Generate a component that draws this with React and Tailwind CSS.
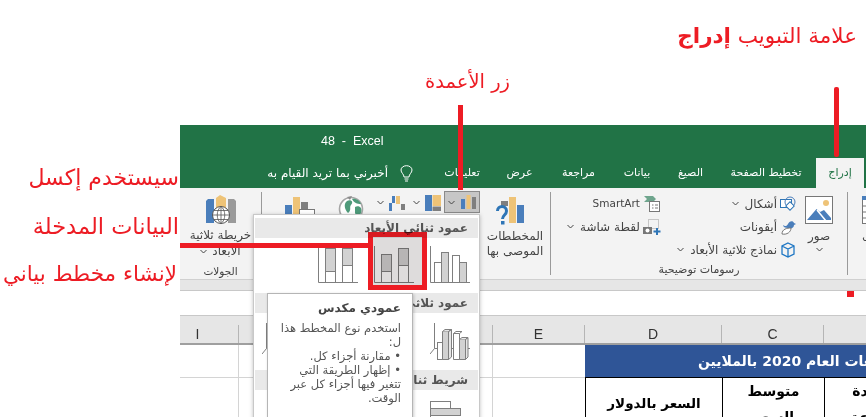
import React from 'react';

const FONT = "font-['DejaVu_Sans',sans-serif]";

const Chevron = ({ className = '' }) => (
    <svg width="7" height="5" viewBox="0 0 7 5" className={className}>
        <path d="M0.5 1 L3.5 4 L6.5 1" fill="none" stroke="#444" strokeWidth="1" />
    </svg>
);

const Tab = ({ children, w }) => (
    <div className={`text-white text-[11px] flex items-center justify-center h-full whitespace-nowrap ${w}`}>{children}</div>
);

const PictureIcon = () => (
    <svg width="28" height="28" viewBox="0 0 28 28">
        <rect x="0.5" y="0.5" width="27" height="27" fill="#fff" stroke="#777" />
        <circle cx="21" cy="7" r="3" fill="#eec377" />
        <path d="M2 24 L11.5 13 L15 16 L19 14 L26 22 L26 24 Z" fill="#4a7ebb" />
        <path d="M12 14 L21 25" stroke="#fff" strokeWidth="1.5" />
    </svg>
);

const ShapesIcon = () => (
    <svg width="16" height="16" viewBox="0 0 16 16">
        <rect x="0.5" y="3.5" width="11" height="8" fill="#fff" stroke="#2e75b6" />
        <circle cx="10" cy="6" r="5" fill="none" stroke="#4a7ebb" />
        <rect x="7" y="7" width="6" height="6" transform="rotate(45 10 10)" fill="#fff" stroke="#2e75b6" />
    </svg>
);

const IconsIcon = () => (
    <svg width="16" height="16" viewBox="0 0 16 16">
        <path d="M3 6 C5 8 7 7 8 5 C9 2 13 1 14 4 L16 5 L14 6 C14 9 11 10 8 9 C5 9 3 8 3 6 Z" fill="#4a7ebb" />
        <path d="M2 15 C2 10 7 9 11 9 C11 13 7 16 2 15 Z" fill="#fff" stroke="#777" />
    </svg>
);

const CubeIcon = () => (
    <svg width="16" height="16" viewBox="0 0 16 16">
        <path d="M8 1 L14 4 L14 12 L8 15 L2 12 L2 4 Z M2 4 L8 7 L14 4 M8 7 L8 15" fill="none" stroke="#1f77c4" strokeWidth="1.3" />
    </svg>
);

const SmartArtIcon = () => (
    <svg width="18" height="18" viewBox="0 0 18 18">
        <path d="M1 1 L10 1 L13 4 L10 7 L1 7 L4 4 Z" fill="#6fa58d" />
        <rect x="6.5" y="6.5" width="10" height="10" fill="#fff" stroke="#777" />
        <path d="M9 10 H10.5 M12 10 H15 M9 13 H10.5 M12 13 H15" stroke="#777" />
    </svg>
);

const ScreenshotIcon = () => (
    <svg width="18" height="18" viewBox="0 0 18 18">
        <rect x="5.5" y="1.5" width="10" height="9" fill="none" stroke="#999" strokeDasharray="1 1" />
        <rect x="0" y="9" width="9" height="7" fill="#777" />
        <circle cx="4.5" cy="12.5" r="2" fill="#fff" />
        <path d="M14 10 V17 M10.5 13.5 H17.5" stroke="#2e75b6" strokeWidth="2" />
    </svg>
);

const ColumnsIcon = () => (
    <svg width="16" height="14" viewBox="0 0 16 14">
        <rect x="0" y="4" width="4" height="10" fill="#4a7ebb" />
        <rect x="5.5" y="0" width="4" height="14" fill="#eec377" />
        <rect x="11" y="2" width="4" height="12" fill="#7f7f7f" />
    </svg>
);

const HierarchyIcon = () => (
    <svg width="16" height="16" viewBox="0 0 16 16">
        <rect x="0" y="0" width="7" height="16" fill="#4a7ebb" />
        <rect x="7.5" y="0" width="8.5" height="11" fill="#eec377" />
        <rect x="7.5" y="11.5" width="8.5" height="4.5" fill="#7f7f7f" />
    </svg>
);

const WaterfallIcon = () => (
    <svg width="16" height="16" viewBox="0 0 16 16">
        <path d="M0 8 H3 V16 H0 Z M3 8 H6 V1 H3 Z" fill="#4a7ebb" />
        <path d="M7 1 H11 V9 H7 Z" fill="#eec377" />
        <path d="M12 9 H16 V15 H12 Z" fill="#7f7f7f" />
    </svg>
);

const RecommendedIcon = () => (
    <svg width="28" height="28" viewBox="0 0 28 28">
        <rect x="5" y="4" width="7" height="5" fill="#7f7f7f" />
        <rect x="13" y="0" width="7" height="26" fill="#eec377" />
        <rect x="21" y="8" width="7" height="18" fill="#4a7ebb" />
        <path d="M1.5 14 C1.5 8 10.5 8 10.5 14 C10.5 18 6.5 18 6.5 22" fill="none" stroke="#2e75b6" strokeWidth="3" />
        <rect x="5" y="24" width="3.5" height="3.5" fill="#2e75b6" />
    </svg>
);

const PivotIcon = () => (
    <svg width="30" height="24" viewBox="0 0 30 24">
        <rect x="0" y="8" width="7" height="16" fill="#4a7ebb" />
        <rect x="8" y="0" width="7" height="24" fill="#eec377" />
        <rect x="16" y="5" width="7" height="7" fill="#7f7f7f" />
        <rect x="14.5" y="12.5" width="15" height="11" fill="#fff" stroke="#777" />
    </svg>
);

const GlobeIcon = () => (
    <svg width="26" height="26" viewBox="0 0 26 26">
        <circle cx="13" cy="14" r="11.5" fill="#fff" stroke="#a5a5a5" strokeWidth="1.6" />
        <path d="M9 2 L14 1 L12 5 Z" fill="#8a8a8a" />
        <path d="M9 6 C13 4 16 7 13 10 C11 12 14 15 10 18 C7 15 5 9 9 6 Z M17 12 C21 10 25 13 23 18 C21 22 18 21 17 18 Z M14 4 C18 3 22 6 23 9 C19 9 16 8 14 4 Z" fill="#4e9a7a" />
    </svg>
);

const Map3DIcon = () => (
    <svg width="32" height="30" viewBox="0 0 32 30">
        <path d="M1 6 L3 4 L9 4 L9 28 L1 28 Z" fill="#4a7ebb" />
        <path d="M11 3 L15 0 L21 3 L21 15 L11 15 Z" fill="#eec377" />
        <path d="M23 4 L29 4 L31 6 L31 28 L23 28 Z" fill="#9a9a9a" />
        <circle cx="16" cy="20" r="8.5" fill="#fff" stroke="#555" />
        <path d="M7.5 20 H24.5 M16 11.5 V28.5 M9 15.5 H23 M9 24.5 H23 M16 11.5 C11 15 11 25 16 28.5 M16 11.5 C21 15 21 25 16 28.5" fill="none" stroke="#555" strokeWidth="0.8" />
    </svg>
);

const Bulb = () => (
    <svg width="13" height="17" viewBox="0 0 13 17">
        <path d="M4 12 C4 9 1 8 1 5 C1 2.5 3.5 0.7 6.5 0.7 C9.5 0.7 12 2.5 12 5 C12 8 9 9 9 12 Z M4.5 14 H8.5 M5 16 H8" fill="none" stroke="#fff" />
    </svg>
);

// 40x37 chart thumbnails of the dropdown
const GRAY = '#d2d2d2';
const LINE = '#7f7f7f';

const ChartThumb = ({ bars }) => (
    <svg width="40" height="37" viewBox="0 0 40 37">
        <path d="M0.5 0 V36.5 H40" fill="none" stroke={LINE} />
        {bars.map((b, i) => (
            <rect key={i} x={b[0] + 0.5} y={b[1] + 0.5} width={b[2]} height={b[3]} fill={b[4]} stroke={LINE} />
        ))}
    </svg>
);

const Chart3D = () => (
    <svg width="40" height="38" viewBox="0 0 40 38">
        <path d="M4.5 0 V25.5 L0 31 M4.5 25.5 H40" fill="none" stroke={LINE} />
        <rect x="7.5" y="19.5" width="5" height="17" fill="#fff" stroke={LINE} />
        <path d="M12.5 8.5 H18.5 V36.5 H12.5 Z" fill={GRAY} stroke={LINE} />
        <path d="M12.5 8.5 L15 6.5 H21.5 L18.5 8.5 M18.5 8.5 L21.5 6.5 V34 L18.5 36.5 Z" fill="#e6e6e6" stroke={LINE} />
        <path d="M23.5 10.5 H29.5 V36.5 H23.5 Z M23.5 10.5 L26 8.5 H32 L29.5 10.5" fill="#fff" stroke={LINE} />
        <path d="M29.5 16.5 H35.5 V36.5 H29.5 Z" fill={GRAY} stroke={LINE} />
        <path d="M29.5 16.5 L32 14.5 H38 L35.5 16.5 M35.5 16.5 L38 14.5 V34 L35.5 36.5 Z" fill="#e6e6e6" stroke={LINE} />
    </svg>
);

const BarThumb = () => (
    <svg width="40" height="26" viewBox="0 0 40 26">
        <path d="M0.5 0 V26" stroke={LINE} />
        <rect x="0.5" y="0.5" width="20" height="7" fill="#fff" stroke={LINE} />
        <rect x="0.5" y="7.5" width="30" height="7" fill={GRAY} stroke={LINE} />
        <rect x="0.5" y="18.5" width="14" height="7" fill="#fff" stroke={LINE} />
    </svg>
);

const SectionHead = ({ children }) => (
    <div dir="rtl" className="h-[20px] mx-[1px] bg-[#e9e9e9] text-[#555] text-[12px] font-bold flex items-center px-[10px] whitespace-nowrap">
        {children}
    </div>
);

const RibbonRow = ({ icon, label, chevron, size = 'text-[12px]' }) => (
    <div className="flex items-center justify-end h-[23px] gap-[3px] whitespace-nowrap">
        {chevron && <Chevron className="mr-[3px]" />}
        <span dir="rtl" className={`${size} text-[#444]`}>{label}</span>
        {icon}
    </div>
);

const HeaderCell = ({ w, pad = '', children }) => (
    <div className={`${w} ${pad} h-[18px] flex items-center justify-center border-r border-[#b5b5b5] text-[14px] text-[#333] font-['Liberation_Sans',sans-serif]`}>
        {children}
    </div>
);

export default function App() {
    return (
        <div className={`relative w-[866px] h-[417px] overflow-hidden bg-white ${FONT}`}>
            <div className="pt-[125px] pl-[180px]">
                {/* title and tabs */}
                <div className="bg-[#217346] h-[63px] flex flex-col">
                    <div className="h-[33px] flex items-center pl-[141px] text-white text-[12.5px] whitespace-pre font-['Liberation_Sans',sans-serif]">
                        48  -  Excel
                    </div>
                    <div dir="rtl" className="h-[30px] flex items-stretch pr-[2px]">
                        <div className="w-[48px] bg-[#f3f3f3] text-[#217346] text-[11px] flex items-center justify-center">إدراج</div>
                        <Tab w="w-[100px]">تخطيط الصفحة</Tab>
                        <Tab w="w-[51px]">الصيغ</Tab>
                        <Tab w="w-[56px]">بيانات</Tab>
                        <Tab w="w-[61px]">مراجعة</Tab>
                        <Tab w="w-[57px]">عرض</Tab>
                        <Tab w="w-[58px]">تعليمات</Tab>
                        <div className="flex items-center gap-[12px] pr-[20px] text-white text-[12px] whitespace-nowrap">
                            <Bulb />
                            <span>أخبرني بما تريد القيام به</span>
                        </div>
                    </div>
                </div>

                {/* ribbon */}
                <div className="bg-[#f3f3f3] h-[91px] flex text-[#444]">
                    <div className="w-[82px] shrink-0 flex flex-col items-center border-r border-[#9a9a9a] my-[4px]">
                        <div className="pt-[3px]"><Map3DIcon /></div>
                        <div dir="rtl" className="text-[12px] leading-[16px] text-center mt-[2px] whitespace-nowrap">خريطة ثلاثية</div>
                        <div className="flex items-center gap-[5px] text-[12px] leading-[16px]">
                            <Chevron />
                            <span>الأبعاد</span>
                        </div>
                        <div className="text-[10.5px] mt-[5px]">الجولات</div>
                    </div>

                    <div className="w-[289px] shrink-0 flex border-r border-[#9a9a9a] my-[4px]">
                        <div className="pl-[23px] pt-[5px] w-[74px]"><PivotIcon /></div>
                        <div className="pt-[3px] pl-[2px] w-[33px]"><GlobeIcon /></div>
                        <div className="w-[111px] pl-[8px] flex items-start">
                            <div className="flex items-center gap-[5px] h-[21px]"><Chevron /><WaterfallIcon /></div>
                            <div className="flex items-center gap-[5px] h-[21px] ml-[8px]"><Chevron /><HierarchyIcon /></div>
                            <div className="flex items-center justify-center gap-[6px] w-[36px] h-[22px] ml-[3px] -mt-[1px] bg-[#c6c6c6] border border-[#8a8a8a]"><Chevron /><ColumnsIcon /></div>
                        </div>
                        <div className="flex-1 flex flex-col items-center pt-[5px]">
                            <div className="pr-[11px] h-[28px]"><RecommendedIcon /></div>
                            <div dir="rtl" className="text-[12px] leading-[15px] text-center mt-[4px] whitespace-nowrap">المخططات<br />الموصى بها</div>
                        </div>
                    </div>

                    <div className="w-[297px] shrink-0 flex flex-col border-r border-[#9a9a9a] my-[4px]">
                        <div className="flex-1 flex">
                            <div className="w-[110px]">
                                <RibbonRow label="SmartArt" size="text-[10.5px]" icon={<SmartArtIcon />} />
                                <RibbonRow chevron label="لقطة شاشة" icon={<ScreenshotIcon />} />
                            </div>
                            <div className="w-[135px]">
                                <RibbonRow chevron label="أشكال" icon={<ShapesIcon />} />
                                <RibbonRow label="أيقونات" icon={<IconsIcon />} />
                                <RibbonRow chevron label="نماذج ثلاثية الأبعاد" icon={<CubeIcon />} />
                            </div>
                            <div className="flex-1 flex flex-col items-center pt-[4px] pr-[5px]">
                                <PictureIcon />
                                <div className="text-[12px] mt-[4px] leading-[16px]">صور</div>
                                <Chevron className="mt-[3px]" />
                            </div>
                        </div>
                        <div className="text-[11px] text-center leading-[14px] -mb-[2px]">رسومات توضيحية</div>
                    </div>

                    <div className="flex-1 pl-[14px] pt-[8px] overflow-hidden">
                        <svg width="8" height="28" viewBox="0 0 8 28" className="block">
                            <rect x="0.5" y="0.5" width="10" height="27" fill="#fff" stroke="#777" />
                            <rect x="0" y="0" width="8" height="4" fill="#4a7ebb" />
                            <path d="M0 10 H8 M0 16 H8 M0 22 H8" stroke="#777" />
                        </svg>
                        <div className="text-[12px] leading-[16px] mt-[3px] whitespace-nowrap">جدول</div>
                    </div>
                </div>

                {/* strip and formula bar */}
                <div className="h-[11px] bg-[#e6e6e6] border-t border-[#d0d0d0]"></div>
                <div className="h-[26px] bg-white border-t border-b border-[#c8c8c8]"></div>

                {/* column headers */}
                <div className="h-[29px] bg-[#e6e6e6] border-b-2 border-[#9f9f9f] flex items-end">
                    <HeaderCell w="w-[59px]" pad="pr-[23px]">I</HeaderCell>
                    <div className="w-[254px] h-[18px] border-r border-[#b5b5b5]"></div>
                    <HeaderCell w="w-[92px]">E</HeaderCell>
                    <HeaderCell w="w-[137px]">D</HeaderCell>
                    <HeaderCell w="w-[102px]">C</HeaderCell>
                    <div className="flex-1"></div>
                </div>

                {/* sheet rows */}
                <div className="flex">
                    <div className="w-[405px] h-[33px] border-b border-[#d4d4d4] flex">
                        <div className="w-[59px] border-r border-[#d4d4d4]"></div>
                        <div className="w-[254px] border-r border-[#d4d4d4]"></div>
                    </div>
                    <div className="flex-1 h-[33px] bg-[#2f5597] border-b border-black overflow-hidden flex items-center pl-[113px] text-white text-[14px] font-bold whitespace-nowrap">
                        <span dir="rtl">مبيعات العام 2020 بالملايين</span>
                    </div>
                </div>
                <div className="flex h-[40px]">
                    <div className="w-[405px] flex">
                        <div className="w-[59px] border-r border-[#d4d4d4]"></div>
                        <div className="w-[254px] border-r border-[#d4d4d4]"></div>
                    </div>
                    <div className="w-[137px] shrink-0 border-l border-black flex items-center justify-center pt-[10px] text-[13.5px] font-bold text-black">السعر بالدولار</div>
                    <div className="w-[102px] shrink-0 border-l border-black text-center text-[14px] leading-[26px] font-bold text-black">متوسط<br />السعر</div>
                    <div className="flex-1 border-l border-black overflow-hidden">
                        <div className="w-[100px] text-center text-[14px] leading-[26px] font-bold text-black">الوحدة<br />المباعة</div>
                    </div>
                </div>
            </div>

            {/* chart dropdown */}
            <div className="absolute left-[253px] top-[214px] w-[227px] h-[210px] bg-white border border-[#c8c8c8] shadow-[0_1px_4px_rgba(0,0,0,0.25)] pt-[3px]">
                <SectionHead>عمود ثنائي الأبعاد</SectionHead>
                <div className="h-[55px] flex items-start pt-[8px] pl-[64px] gap-[16px]">
                    <ChartThumb bars={[[7, 2, 10, 23, GRAY], [7, 25, 10, 11, '#fff'], [24, 2, 10, 17, GRAY], [24, 19, 10, 17, '#fff']]} />
                    <ChartThumb bars={[[7, 8, 10, 17, GRAY], [7, 25, 10, 11, '#fff'], [24, 2, 10, 17, GRAY], [24, 19, 10, 17, '#fff']]} />
                    <ChartThumb bars={[[4, 16, 7, 20, '#fff'], [11, 6, 7, 30, GRAY], [22, 9, 7, 27, '#fff'], [29, 16, 7, 20, GRAY]]} />
                </div>
                <SectionHead>عمود ثلاثي الأبعاد</SectionHead>
                <div className="h-[57px] flex items-start pt-[10px] pl-[8px] gap-[128px]"><Chart3D /><Chart3D /></div>
                <SectionHead>شريط ثنائي الأبعاد</SectionHead>
                <div className="pl-[176px] pt-[11px]"><BarThumb /></div>
            </div>

            {/* tooltip */}
            <div dir="rtl" className="absolute left-[267px] top-[293px] w-[146px] h-[135px] bg-white border border-[#b5b5b5] shadow-[1px_1px_3px_rgba(0,0,0,0.2)] pr-[11px] pt-[6px] text-[#555] whitespace-nowrap">
                <div className="text-[12px] font-bold leading-[16px] text-[#444]">عمودي مكدس</div>
                <div className="text-[11.5px] leading-[14px] mt-[5px]">
                    <p>استخدم نوع المخطط هذا</p>
                    <p>ل:</p>
                    <p>• مقارنة أجزاء كل.</p>
                    <p>• إظهار الطريقة التي</p>
                    <p>تتغير فيها أجزاء كل عبر</p>
                    <p>الوقت.</p>
                </div>
            </div>

            {/* annotations */}
            <div className="absolute left-[368px] top-[232px] w-[59px] h-[58px] border-[5px] border-[#ed1c24] bg-[#dedcdc] mix-blend-multiply"></div>
            <div className="absolute left-[180px] top-[243px] w-[190px] h-[5px] bg-[#ed1c24]"></div>
            <div className="absolute left-[458px] top-[105px] w-[5px] h-[85px] bg-[#ed1c24]"></div>
            <div className="absolute left-[834px] top-[87px] w-[5px] h-[70px] bg-[#ed1c24] rounded-[2px]"></div>
            <div className="absolute left-[847px] top-[291px] w-[7px] h-[6px] bg-[#ed1c24]"></div>

            <div dir="rtl" className="absolute left-[640px] top-[22px] w-[217px] text-[21.5px] leading-[28px] text-[#ed1c24] whitespace-nowrap">
                علامة التبويب <b>إدراج</b>
            </div>
            <div dir="rtl" className="absolute left-[400px] top-[68px] w-[110px] text-[19.5px] leading-[28px] text-[#ed1c24] whitespace-nowrap">زر الأعمدة</div>
            <div dir="rtl" className="absolute left-0 top-[164px] w-[179px] text-[22px] leading-[28px] text-[#ed1c24] whitespace-nowrap">سيستخدم إكسل</div>
            <div dir="rtl" className="absolute left-0 top-[212px] w-[179px] text-[22.5px] leading-[28px] text-[#ed1c24] whitespace-nowrap">البيانات المدخلة</div>
            <div dir="rtl" className="absolute left-0 top-[260px] w-[177px] text-[21.5px] leading-[28px] text-[#ed1c24] whitespace-nowrap">لإنشاء مخطط بياني</div>
        </div>
    );
}
